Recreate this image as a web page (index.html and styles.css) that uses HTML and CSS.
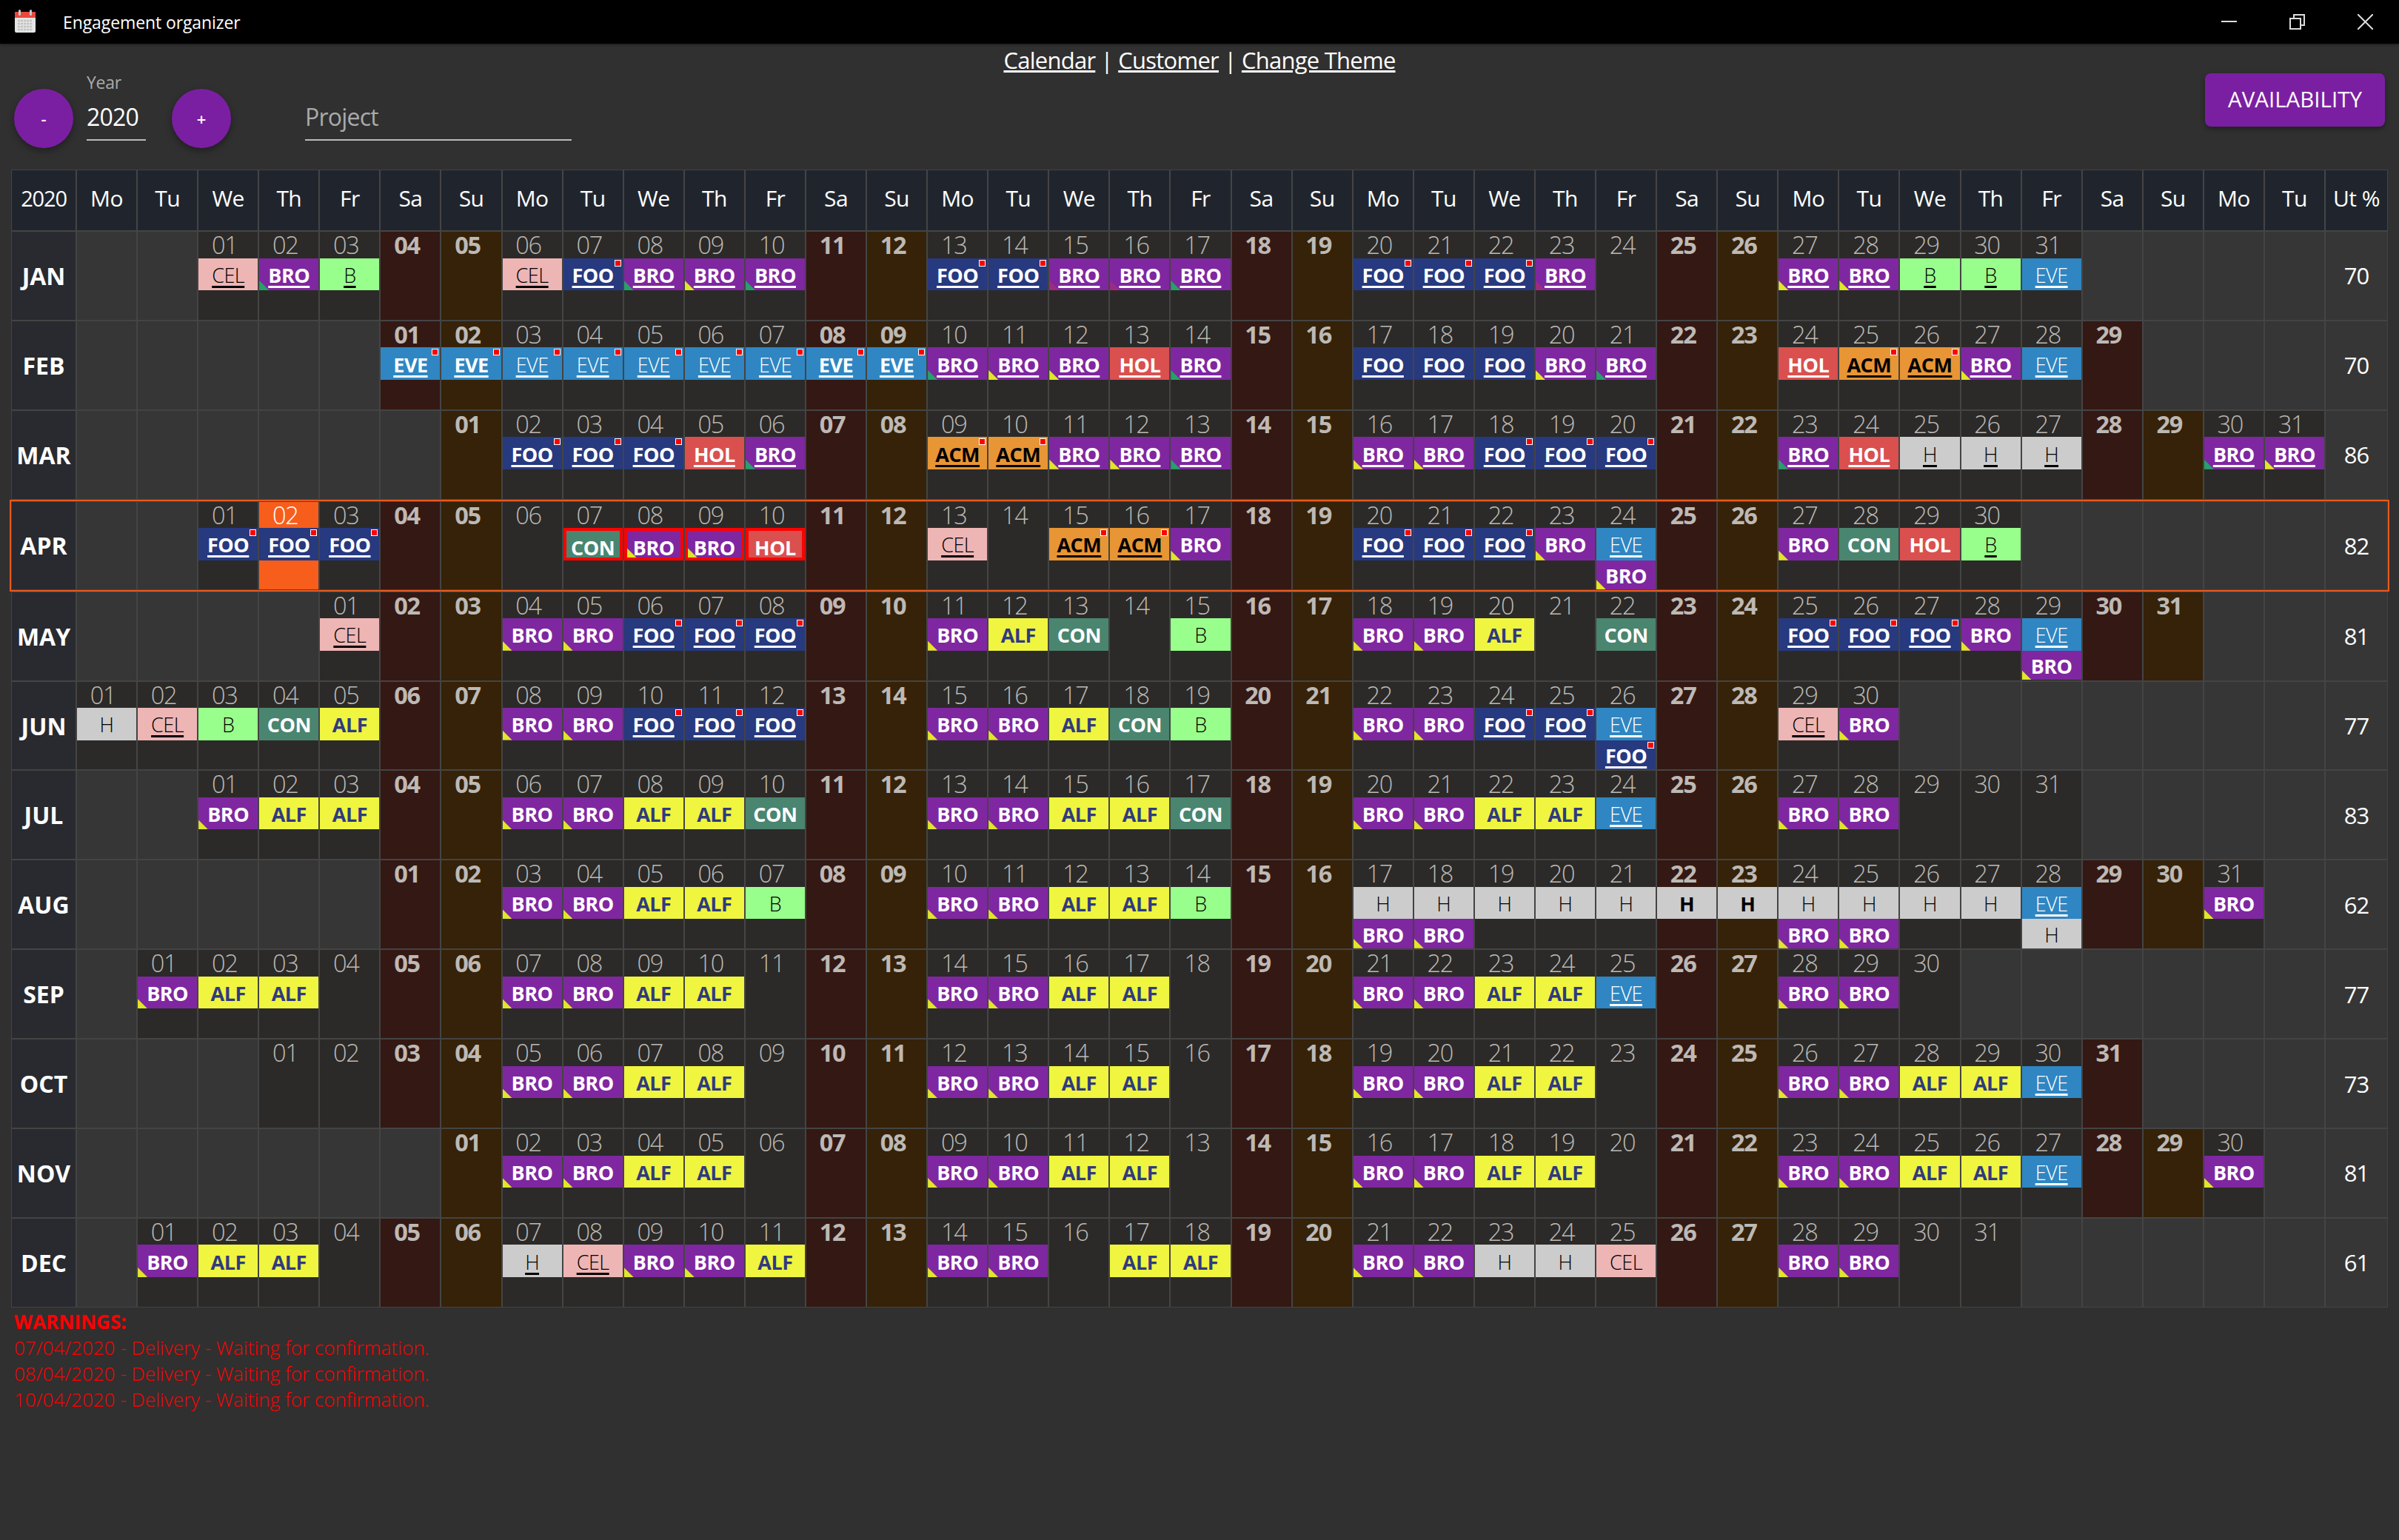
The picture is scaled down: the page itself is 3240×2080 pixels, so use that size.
FILE: index.html
```html
<!DOCTYPE html>
<html lang="en">
<head>
<meta charset="utf-8">
<title>Engagement organizer</title>
<link rel="stylesheet" href="styles.css">
</head>
<body>
<header class="titlebar">
<svg class="appicon" width="30" height="32" viewBox="0 0 30 32"><rect x="1" y="3" width="28" height="28" rx="2" fill="#e4e4e4"/><path d="M1 11V5a2 2 0 0 1 2-2h24a2 2 0 0 1 2 2v6z" fill="#e8483c"/><rect x="6" y="0" width="3" height="8" rx="1.5" fill="#c9c9c9"/><rect x="21" y="0" width="3" height="8" rx="1.5" fill="#c9c9c9"/><path d="M5 15h20M5 19h20M5 23h20M5 27h20" stroke="#c2c2c2" stroke-width="2.4" stroke-dasharray="3 1"/></svg>
<span class="apptitle">Engagement organizer</span>
<div class="winbtns">
<svg width="21" height="21" viewBox="0 0 21 21"><path d="M0 10h21" stroke="#ddd" stroke-width="2"/></svg>
<svg width="21" height="21" viewBox="0 0 21 21"><path d="M1 6h14v14H1zM6 6V1h14v14h-5" fill="none" stroke="#ddd" stroke-width="2"/></svg>
<svg width="21" height="21" viewBox="0 0 21 21"><path d="M0 0l21 21M21 0L0 21" stroke="#ddd" stroke-width="2"/></svg>
</div>
</header>
<section class="toolbar">
<div class="tools">
<button class="round">-</button>
<div class="field yearfield"><label class="fieldlabel">Year</label><div class="fieldvalue">2020</div></div>
<button class="round plus">+</button>
<div class="field projectfield"><div class="fieldvalue placeholder">Project</div></div>
</div>
<nav class="links"><a href="#">Calendar</a> | <a href="#">Customer</a> | <a href="#">Change Theme</a></nav>
<div class="actions"><button class="avail">AVAILABILITY</button></div>
</section>
<main class="cal">
<div class="row head"><div class="h yr">2020</div><div class="h">Mo</div><div class="h">Tu</div><div class="h">We</div><div class="h">Th</div><div class="h">Fr</div><div class="h">Sa</div><div class="h">Su</div><div class="h">Mo</div><div class="h">Tu</div><div class="h">We</div><div class="h">Th</div><div class="h">Fr</div><div class="h">Sa</div><div class="h">Su</div><div class="h">Mo</div><div class="h">Tu</div><div class="h">We</div><div class="h">Th</div><div class="h">Fr</div><div class="h">Sa</div><div class="h">Su</div><div class="h">Mo</div><div class="h">Tu</div><div class="h">We</div><div class="h">Th</div><div class="h">Fr</div><div class="h">Sa</div><div class="h">Su</div><div class="h">Mo</div><div class="h">Tu</div><div class="h">We</div><div class="h">Th</div><div class="h">Fr</div><div class="h">Sa</div><div class="h">Su</div><div class="h">Mo</div><div class="h">Tu</div><div class="h">Ut %</div></div>

<div class="row"><div class="m">JAN</div><div class="x"></div><div class="x"></div><div class="c"><p>01</p><span class="cel u">CEL</span></div><div class="c"><p>02</p><span class="bro u tg">BRO</span></div><div class="c"><p>03</p><span class="grn u">B</span></div><div class="c sa"><p>04</p></div><div class="c su"><p>05</p></div><div class="c"><p>06</p><span class="cel u">CEL</span></div><div class="c"><p>07</p><span class="foo u dot">FOO</span></div><div class="c"><p>08</p><span class="bro u tg">BRO</span></div><div class="c"><p>09</p><span class="bro u ty">BRO</span></div><div class="c"><p>10</p><span class="bro u tg">BRO</span></div><div class="c sa"><p>11</p></div><div class="c su"><p>12</p></div><div class="c"><p>13</p><span class="foo u dot">FOO</span></div><div class="c"><p>14</p><span class="foo u dot">FOO</span></div><div class="c"><p>15</p><span class="bro u tm">BRO</span></div><div class="c"><p>16</p><span class="bro u tm">BRO</span></div><div class="c"><p>17</p><span class="bro u tg">BRO</span></div><div class="c sa"><p>18</p></div><div class="c su"><p>19</p></div><div class="c"><p>20</p><span class="foo u dot">FOO</span></div><div class="c"><p>21</p><span class="foo u dot">FOO</span></div><div class="c"><p>22</p><span class="foo u dot">FOO</span></div><div class="c"><p>23</p><span class="bro u tm">BRO</span></div><div class="c"><p>24</p></div><div class="c sa"><p>25</p></div><div class="c su"><p>26</p></div><div class="c"><p>27</p><span class="bro u ty">BRO</span></div><div class="c"><p>28</p><span class="bro u ty">BRO</span></div><div class="c"><p>29</p><span class="grn u">B</span></div><div class="c"><p>30</p><span class="grn u">B</span></div><div class="c"><p>31</p><span class="eve u">EVE</span></div><div class="x"></div><div class="x"></div><div class="x"></div><div class="x"></div><div class="ut">70</div></div>

<div class="row"><div class="m">FEB</div><div class="x"></div><div class="x"></div><div class="x"></div><div class="x"></div><div class="x"></div><div class="c sa"><p>01</p><span class="eve u dot w">EVE</span></div><div class="c su"><p>02</p><span class="eve u dot w">EVE</span></div><div class="c"><p>03</p><span class="eve u dot">EVE</span></div><div class="c"><p>04</p><span class="eve u dot">EVE</span></div><div class="c"><p>05</p><span class="eve u dot">EVE</span></div><div class="c"><p>06</p><span class="eve u dot">EVE</span></div><div class="c"><p>07</p><span class="eve u dot">EVE</span></div><div class="c sa"><p>08</p><span class="eve u dot w">EVE</span></div><div class="c su"><p>09</p><span class="eve u dot w">EVE</span></div><div class="c"><p>10</p><span class="bro u tg">BRO</span></div><div class="c"><p>11</p><span class="bro u ty">BRO</span></div><div class="c"><p>12</p><span class="bro u ty">BRO</span></div><div class="c"><p>13</p><span class="hol u">HOL</span></div><div class="c"><p>14</p><span class="bro u tg">BRO</span></div><div class="c sa"><p>15</p></div><div class="c su"><p>16</p></div><div class="c"><p>17</p><span class="foo u">FOO</span></div><div class="c"><p>18</p><span class="foo u">FOO</span></div><div class="c"><p>19</p><span class="foo u">FOO</span></div><div class="c"><p>20</p><span class="bro u ty">BRO</span></div><div class="c"><p>21</p><span class="bro u tg">BRO</span></div><div class="c sa"><p>22</p></div><div class="c su"><p>23</p></div><div class="c"><p>24</p><span class="hol u">HOL</span></div><div class="c"><p>25</p><span class="acm u dot">ACM</span></div><div class="c"><p>26</p><span class="acm u dot">ACM</span></div><div class="c"><p>27</p><span class="bro u ty">BRO</span></div><div class="c"><p>28</p><span class="eve u">EVE</span></div><div class="c sa"><p>29</p></div><div class="x"></div><div class="x"></div><div class="x"></div><div class="ut">70</div></div>

<div class="row"><div class="m">MAR</div><div class="x"></div><div class="x"></div><div class="x"></div><div class="x"></div><div class="x"></div><div class="x"></div><div class="c su"><p>01</p></div><div class="c"><p>02</p><span class="foo u dot">FOO</span></div><div class="c"><p>03</p><span class="foo u dot">FOO</span></div><div class="c"><p>04</p><span class="foo u dot">FOO</span></div><div class="c"><p>05</p><span class="hol u">HOL</span></div><div class="c"><p>06</p><span class="bro u tg">BRO</span></div><div class="c sa"><p>07</p></div><div class="c su"><p>08</p></div><div class="c"><p>09</p><span class="acm u dot">ACM</span></div><div class="c"><p>10</p><span class="acm u dot">ACM</span></div><div class="c"><p>11</p><span class="bro u ty">BRO</span></div><div class="c"><p>12</p><span class="bro u ty">BRO</span></div><div class="c"><p>13</p><span class="bro u tg">BRO</span></div><div class="c sa"><p>14</p></div><div class="c su"><p>15</p></div><div class="c"><p>16</p><span class="bro u ty">BRO</span></div><div class="c"><p>17</p><span class="bro u ty">BRO</span></div><div class="c"><p>18</p><span class="foo u dot">FOO</span></div><div class="c"><p>19</p><span class="foo u dot">FOO</span></div><div class="c"><p>20</p><span class="foo u dot">FOO</span></div><div class="c sa"><p>21</p></div><div class="c su"><p>22</p></div><div class="c"><p>23</p><span class="bro u tg">BRO</span></div><div class="c"><p>24</p><span class="hol u">HOL</span></div><div class="c"><p>25</p><span class="hday u">H</span></div><div class="c"><p>26</p><span class="hday u">H</span></div><div class="c"><p>27</p><span class="hday u">H</span></div><div class="c sa"><p>28</p></div><div class="c su"><p>29</p></div><div class="c"><p>30</p><span class="bro u tg">BRO</span></div><div class="c"><p>31</p><span class="bro u ty">BRO</span></div><div class="ut">86</div></div>

<div class="row current"><div class="m">APR</div><div class="x"></div><div class="x"></div><div class="c"><p>01</p><span class="foo u dot">FOO</span></div><div class="c today"><p>02</p><span class="foo u dot">FOO</span></div><div class="c"><p>03</p><span class="foo u dot">FOO</span></div><div class="c sa"><p>04</p></div><div class="c su"><p>05</p></div><div class="c"><p>06</p></div><div class="c"><p>07</p><span class="con alert">CON</span></div><div class="c"><p>08</p><span class="bro ty alert">BRO</span></div><div class="c"><p>09</p><span class="bro ty alert">BRO</span></div><div class="c"><p>10</p><span class="hol alert">HOL</span></div><div class="c sa"><p>11</p></div><div class="c su"><p>12</p></div><div class="c"><p>13</p><span class="cel u">CEL</span></div><div class="c"><p>14</p></div><div class="c"><p>15</p><span class="acm u dot">ACM</span></div><div class="c"><p>16</p><span class="acm u dot">ACM</span></div><div class="c"><p>17</p><span class="bro ty">BRO</span></div><div class="c sa"><p>18</p></div><div class="c su"><p>19</p></div><div class="c"><p>20</p><span class="foo u dot">FOO</span></div><div class="c"><p>21</p><span class="foo u dot">FOO</span></div><div class="c"><p>22</p><span class="foo u dot">FOO</span></div><div class="c"><p>23</p><span class="bro ty">BRO</span></div><div class="c"><p>24</p><span class="eve u">EVE</span><span class="bro ty">BRO</span></div><div class="c sa"><p>25</p></div><div class="c su"><p>26</p></div><div class="c"><p>27</p><span class="bro ty">BRO</span></div><div class="c"><p>28</p><span class="con">CON</span></div><div class="c"><p>29</p><span class="hol">HOL</span></div><div class="c"><p>30</p><span class="grn u">B</span></div><div class="x"></div><div class="x"></div><div class="x"></div><div class="x"></div><div class="x"></div><div class="ut">82</div></div>

<div class="row"><div class="m">MAY</div><div class="x"></div><div class="x"></div><div class="x"></div><div class="x"></div><div class="c"><p>01</p><span class="cel u">CEL</span></div><div class="c sa"><p>02</p></div><div class="c su"><p>03</p></div><div class="c"><p>04</p><span class="bro ty">BRO</span></div><div class="c"><p>05</p><span class="bro ty">BRO</span></div><div class="c"><p>06</p><span class="foo u dot">FOO</span></div><div class="c"><p>07</p><span class="foo u dot">FOO</span></div><div class="c"><p>08</p><span class="foo u dot">FOO</span></div><div class="c sa"><p>09</p></div><div class="c su"><p>10</p></div><div class="c"><p>11</p><span class="bro ty">BRO</span></div><div class="c"><p>12</p><span class="alf">ALF</span></div><div class="c"><p>13</p><span class="con">CON</span></div><div class="c"><p>14</p></div><div class="c"><p>15</p><span class="grn">B</span></div><div class="c sa"><p>16</p></div><div class="c su"><p>17</p></div><div class="c"><p>18</p><span class="bro ty">BRO</span></div><div class="c"><p>19</p><span class="bro ty">BRO</span></div><div class="c"><p>20</p><span class="alf">ALF</span></div><div class="c"><p>21</p></div><div class="c"><p>22</p><span class="con">CON</span></div><div class="c sa"><p>23</p></div><div class="c su"><p>24</p></div><div class="c"><p>25</p><span class="foo u dot">FOO</span></div><div class="c"><p>26</p><span class="foo u dot">FOO</span></div><div class="c"><p>27</p><span class="foo u dot">FOO</span></div><div class="c"><p>28</p><span class="bro ty">BRO</span></div><div class="c"><p>29</p><span class="eve u">EVE</span><span class="bro ty">BRO</span></div><div class="c sa"><p>30</p></div><div class="c su"><p>31</p></div><div class="x"></div><div class="x"></div><div class="ut">81</div></div>

<div class="row"><div class="m">JUN</div><div class="c"><p>01</p><span class="hday">H</span></div><div class="c"><p>02</p><span class="cel u">CEL</span></div><div class="c"><p>03</p><span class="grn">B</span></div><div class="c"><p>04</p><span class="con">CON</span></div><div class="c"><p>05</p><span class="alf">ALF</span></div><div class="c sa"><p>06</p></div><div class="c su"><p>07</p></div><div class="c"><p>08</p><span class="bro ty">BRO</span></div><div class="c"><p>09</p><span class="bro ty">BRO</span></div><div class="c"><p>10</p><span class="foo u dot">FOO</span></div><div class="c"><p>11</p><span class="foo u dot">FOO</span></div><div class="c"><p>12</p><span class="foo u dot">FOO</span></div><div class="c sa"><p>13</p></div><div class="c su"><p>14</p></div><div class="c"><p>15</p><span class="bro ty">BRO</span></div><div class="c"><p>16</p><span class="bro ty">BRO</span></div><div class="c"><p>17</p><span class="alf">ALF</span></div><div class="c"><p>18</p><span class="con">CON</span></div><div class="c"><p>19</p><span class="grn">B</span></div><div class="c sa"><p>20</p></div><div class="c su"><p>21</p></div><div class="c"><p>22</p><span class="bro ty">BRO</span></div><div class="c"><p>23</p><span class="bro ty">BRO</span></div><div class="c"><p>24</p><span class="foo u dot">FOO</span></div><div class="c"><p>25</p><span class="foo u dot">FOO</span></div><div class="c"><p>26</p><span class="eve u">EVE</span><span class="foo u dot">FOO</span></div><div class="c sa"><p>27</p></div><div class="c su"><p>28</p></div><div class="c"><p>29</p><span class="cel u">CEL</span></div><div class="c"><p>30</p><span class="bro ty">BRO</span></div><div class="x"></div><div class="x"></div><div class="x"></div><div class="x"></div><div class="x"></div><div class="x"></div><div class="x"></div><div class="ut">77</div></div>

<div class="row"><div class="m">JUL</div><div class="x"></div><div class="x"></div><div class="c"><p>01</p><span class="bro ty">BRO</span></div><div class="c"><p>02</p><span class="alf">ALF</span></div><div class="c"><p>03</p><span class="alf">ALF</span></div><div class="c sa"><p>04</p></div><div class="c su"><p>05</p></div><div class="c"><p>06</p><span class="bro ty">BRO</span></div><div class="c"><p>07</p><span class="bro ty">BRO</span></div><div class="c"><p>08</p><span class="alf">ALF</span></div><div class="c"><p>09</p><span class="alf">ALF</span></div><div class="c"><p>10</p><span class="con">CON</span></div><div class="c sa"><p>11</p></div><div class="c su"><p>12</p></div><div class="c"><p>13</p><span class="bro ty">BRO</span></div><div class="c"><p>14</p><span class="bro ty">BRO</span></div><div class="c"><p>15</p><span class="alf">ALF</span></div><div class="c"><p>16</p><span class="alf">ALF</span></div><div class="c"><p>17</p><span class="con">CON</span></div><div class="c sa"><p>18</p></div><div class="c su"><p>19</p></div><div class="c"><p>20</p><span class="bro ty">BRO</span></div><div class="c"><p>21</p><span class="bro ty">BRO</span></div><div class="c"><p>22</p><span class="alf">ALF</span></div><div class="c"><p>23</p><span class="alf">ALF</span></div><div class="c"><p>24</p><span class="eve u">EVE</span></div><div class="c sa"><p>25</p></div><div class="c su"><p>26</p></div><div class="c"><p>27</p><span class="bro ty">BRO</span></div><div class="c"><p>28</p><span class="bro ty">BRO</span></div><div class="c"><p>29</p></div><div class="c"><p>30</p></div><div class="c"><p>31</p></div><div class="x"></div><div class="x"></div><div class="x"></div><div class="x"></div><div class="ut">83</div></div>

<div class="row"><div class="m">AUG</div><div class="x"></div><div class="x"></div><div class="x"></div><div class="x"></div><div class="x"></div><div class="c sa"><p>01</p></div><div class="c su"><p>02</p></div><div class="c"><p>03</p><span class="bro ty">BRO</span></div><div class="c"><p>04</p><span class="bro ty">BRO</span></div><div class="c"><p>05</p><span class="alf">ALF</span></div><div class="c"><p>06</p><span class="alf">ALF</span></div><div class="c"><p>07</p><span class="grn">B</span></div><div class="c sa"><p>08</p></div><div class="c su"><p>09</p></div><div class="c"><p>10</p><span class="bro ty">BRO</span></div><div class="c"><p>11</p><span class="bro ty">BRO</span></div><div class="c"><p>12</p><span class="alf">ALF</span></div><div class="c"><p>13</p><span class="alf">ALF</span></div><div class="c"><p>14</p><span class="grn">B</span></div><div class="c sa"><p>15</p></div><div class="c su"><p>16</p></div><div class="c"><p>17</p><span class="hday">H</span><span class="bro ty">BRO</span></div><div class="c"><p>18</p><span class="hday">H</span><span class="bro ty">BRO</span></div><div class="c"><p>19</p><span class="hday">H</span></div><div class="c"><p>20</p><span class="hday">H</span></div><div class="c"><p>21</p><span class="hday">H</span></div><div class="c sa"><p>22</p><span class="hday w">H</span></div><div class="c su"><p>23</p><span class="hday w">H</span></div><div class="c"><p>24</p><span class="hday">H</span><span class="bro ty">BRO</span></div><div class="c"><p>25</p><span class="hday">H</span><span class="bro ty">BRO</span></div><div class="c"><p>26</p><span class="hday">H</span></div><div class="c"><p>27</p><span class="hday">H</span></div><div class="c"><p>28</p><span class="eve u">EVE</span><span class="hday">H</span></div><div class="c sa"><p>29</p></div><div class="c su"><p>30</p></div><div class="c"><p>31</p><span class="bro ty">BRO</span></div><div class="x"></div><div class="ut">62</div></div>

<div class="row"><div class="m">SEP</div><div class="x"></div><div class="c"><p>01</p><span class="bro ty">BRO</span></div><div class="c"><p>02</p><span class="alf">ALF</span></div><div class="c"><p>03</p><span class="alf">ALF</span></div><div class="c"><p>04</p></div><div class="c sa"><p>05</p></div><div class="c su"><p>06</p></div><div class="c"><p>07</p><span class="bro ty">BRO</span></div><div class="c"><p>08</p><span class="bro ty">BRO</span></div><div class="c"><p>09</p><span class="alf">ALF</span></div><div class="c"><p>10</p><span class="alf">ALF</span></div><div class="c"><p>11</p></div><div class="c sa"><p>12</p></div><div class="c su"><p>13</p></div><div class="c"><p>14</p><span class="bro ty">BRO</span></div><div class="c"><p>15</p><span class="bro ty">BRO</span></div><div class="c"><p>16</p><span class="alf">ALF</span></div><div class="c"><p>17</p><span class="alf">ALF</span></div><div class="c"><p>18</p></div><div class="c sa"><p>19</p></div><div class="c su"><p>20</p></div><div class="c"><p>21</p><span class="bro ty">BRO</span></div><div class="c"><p>22</p><span class="bro ty">BRO</span></div><div class="c"><p>23</p><span class="alf">ALF</span></div><div class="c"><p>24</p><span class="alf">ALF</span></div><div class="c"><p>25</p><span class="eve u">EVE</span></div><div class="c sa"><p>26</p></div><div class="c su"><p>27</p></div><div class="c"><p>28</p><span class="bro ty">BRO</span></div><div class="c"><p>29</p><span class="bro ty">BRO</span></div><div class="c"><p>30</p></div><div class="x"></div><div class="x"></div><div class="x"></div><div class="x"></div><div class="x"></div><div class="x"></div><div class="ut">77</div></div>

<div class="row"><div class="m">OCT</div><div class="x"></div><div class="x"></div><div class="x"></div><div class="c"><p>01</p></div><div class="c"><p>02</p></div><div class="c sa"><p>03</p></div><div class="c su"><p>04</p></div><div class="c"><p>05</p><span class="bro ty">BRO</span></div><div class="c"><p>06</p><span class="bro ty">BRO</span></div><div class="c"><p>07</p><span class="alf">ALF</span></div><div class="c"><p>08</p><span class="alf">ALF</span></div><div class="c"><p>09</p></div><div class="c sa"><p>10</p></div><div class="c su"><p>11</p></div><div class="c"><p>12</p><span class="bro ty">BRO</span></div><div class="c"><p>13</p><span class="bro ty">BRO</span></div><div class="c"><p>14</p><span class="alf">ALF</span></div><div class="c"><p>15</p><span class="alf">ALF</span></div><div class="c"><p>16</p></div><div class="c sa"><p>17</p></div><div class="c su"><p>18</p></div><div class="c"><p>19</p><span class="bro ty">BRO</span></div><div class="c"><p>20</p><span class="bro ty">BRO</span></div><div class="c"><p>21</p><span class="alf">ALF</span></div><div class="c"><p>22</p><span class="alf">ALF</span></div><div class="c"><p>23</p></div><div class="c sa"><p>24</p></div><div class="c su"><p>25</p></div><div class="c"><p>26</p><span class="bro ty">BRO</span></div><div class="c"><p>27</p><span class="bro ty">BRO</span></div><div class="c"><p>28</p><span class="alf">ALF</span></div><div class="c"><p>29</p><span class="alf">ALF</span></div><div class="c"><p>30</p><span class="eve u">EVE</span></div><div class="c sa"><p>31</p></div><div class="x"></div><div class="x"></div><div class="x"></div><div class="ut">73</div></div>

<div class="row"><div class="m">NOV</div><div class="x"></div><div class="x"></div><div class="x"></div><div class="x"></div><div class="x"></div><div class="x"></div><div class="c su"><p>01</p></div><div class="c"><p>02</p><span class="bro ty">BRO</span></div><div class="c"><p>03</p><span class="bro ty">BRO</span></div><div class="c"><p>04</p><span class="alf">ALF</span></div><div class="c"><p>05</p><span class="alf">ALF</span></div><div class="c"><p>06</p></div><div class="c sa"><p>07</p></div><div class="c su"><p>08</p></div><div class="c"><p>09</p><span class="bro ty">BRO</span></div><div class="c"><p>10</p><span class="bro ty">BRO</span></div><div class="c"><p>11</p><span class="alf">ALF</span></div><div class="c"><p>12</p><span class="alf">ALF</span></div><div class="c"><p>13</p></div><div class="c sa"><p>14</p></div><div class="c su"><p>15</p></div><div class="c"><p>16</p><span class="bro ty">BRO</span></div><div class="c"><p>17</p><span class="bro ty">BRO</span></div><div class="c"><p>18</p><span class="alf">ALF</span></div><div class="c"><p>19</p><span class="alf">ALF</span></div><div class="c"><p>20</p></div><div class="c sa"><p>21</p></div><div class="c su"><p>22</p></div><div class="c"><p>23</p><span class="bro ty">BRO</span></div><div class="c"><p>24</p><span class="bro ty">BRO</span></div><div class="c"><p>25</p><span class="alf">ALF</span></div><div class="c"><p>26</p><span class="alf">ALF</span></div><div class="c"><p>27</p><span class="eve u">EVE</span></div><div class="c sa"><p>28</p></div><div class="c su"><p>29</p></div><div class="c"><p>30</p><span class="bro ty">BRO</span></div><div class="x"></div><div class="ut">81</div></div>

<div class="row"><div class="m">DEC</div><div class="x"></div><div class="c"><p>01</p><span class="bro ty">BRO</span></div><div class="c"><p>02</p><span class="alf">ALF</span></div><div class="c"><p>03</p><span class="alf">ALF</span></div><div class="c"><p>04</p></div><div class="c sa"><p>05</p></div><div class="c su"><p>06</p></div><div class="c"><p>07</p><span class="hday u">H</span></div><div class="c"><p>08</p><span class="cel u">CEL</span></div><div class="c"><p>09</p><span class="bro ty">BRO</span></div><div class="c"><p>10</p><span class="bro ty">BRO</span></div><div class="c"><p>11</p><span class="alf">ALF</span></div><div class="c sa"><p>12</p></div><div class="c su"><p>13</p></div><div class="c"><p>14</p><span class="bro ty">BRO</span></div><div class="c"><p>15</p><span class="bro ty">BRO</span></div><div class="c"><p>16</p></div><div class="c"><p>17</p><span class="alf">ALF</span></div><div class="c"><p>18</p><span class="alf">ALF</span></div><div class="c sa"><p>19</p></div><div class="c su"><p>20</p></div><div class="c"><p>21</p><span class="bro ty">BRO</span></div><div class="c"><p>22</p><span class="bro ty">BRO</span></div><div class="c"><p>23</p><span class="hday">H</span></div><div class="c"><p>24</p><span class="hday">H</span></div><div class="c"><p>25</p><span class="cel">CEL</span></div><div class="c sa"><p>26</p></div><div class="c su"><p>27</p></div><div class="c"><p>28</p><span class="bro ty">BRO</span></div><div class="c"><p>29</p><span class="bro ty">BRO</span></div><div class="c"><p>30</p></div><div class="c"><p>31</p></div><div class="x"></div><div class="x"></div><div class="x"></div><div class="x"></div><div class="x"></div><div class="ut">61</div></div>
</main>
<section class="warnings">
<div class="warnhead">WARNINGS:</div>
<div>07/04/2020 - Delivery - Waiting for confirmation.</div>
<div>08/04/2020 - Delivery - Waiting for confirmation.</div>
<div>10/04/2020 - Delivery - Waiting for confirmation.</div>
</section>
</body>
</html>
```
FILE: styles.css
```css
* { box-sizing: border-box; }
html, body { margin: 0; padding: 0; }
body {
  width: 3240px;
  height: 2080px;
  overflow: hidden;
  background: #303030;
  color: #fff;
  font-family: "Open Sans", "Noto Sans", sans-serif;
}

.titlebar {
  height: 59px;
  background: #000;
  display: flex;
  align-items: center;
  padding: 0 35px 0 19px;
  box-shadow: 0 1px 3px rgba(0, 0, 0, .5);
}
.appicon { margin-right: 36px; margin-top: -1px; }
.apptitle { font-size: 23px; letter-spacing: -.1px; flex: 1; }
.winbtns { display: flex; gap: 71px; }

.toolbar {
  height: 170px;
  display: grid;
  grid-template-columns: 1fr auto 1fr;
  align-items: start;
}
.tools { display: flex; padding: 39px 0 0 19px; }
.round {
  width: 80px;
  height: 80px;
  margin-top: 22px;
  border: 0;
  border-radius: 50%;
  background: #7b1fa2;
  color: #fff;
  font: 600 22px "Open Sans", sans-serif;
  box-shadow: 0 4px 10px rgba(0, 0, 0, .35);
}
.plus { margin-left: 35px; }
.yearfield { width: 80px; margin-left: 18px; }
.projectfield { width: 360px; margin-left: 100px; padding-top: 36px; }
.fieldlabel { display: block; height: 26px; line-height: 26px; font-size: 23px; color: #aaa; letter-spacing: -.3px; margin-bottom: 10px; }
.fieldvalue {
  height: 56px;
  line-height: 48px;
  font-size: 32px;
  letter-spacing: -.8px;
  border-bottom: 2px solid #bbb;
}
.placeholder { color: #aaa; }
.links { line-height: 44px; font-size: 31px; letter-spacing: -.75px; color: #fff; }
.links a { color: #fff; }
.actions { display: flex; justify-content: flex-end; padding: 40px 19px 0 0; }
.avail {
  width: 243px;
  height: 72px;
  padding: 0 0 3px;
  border: 0;
  border-radius: 8px;
  background: #7b1fa2;
  color: #fff;
  font: 400 29.5px "Open Sans", sans-serif;
  box-shadow: 0 3px 6px rgba(0, 0, 0, .35);
}

.cal {
  margin: 0 15px;
  background: #444;
  border: 1px solid #444;
  display: flex;
  flex-direction: column;
  gap: 2px;
}
.row {
  display: grid;
  grid-template-columns: 86px repeat(37, minmax(0, 1fr)) 83px;
  column-gap: 2px;
  height: 118.9px;
}
.row.head { height: 81px; }
.row.current {
  height: 118px;
  margin: 2px 0;
  outline: 2px solid #e8591d;
  outline-offset: 1px;
}
.h {
  background: #20252d;
  display: flex;
  align-items: center;
  justify-content: center;
  font-size: 30px;
  letter-spacing: -.6px;
  padding-bottom: 7px;
}
.yr { font-size: 29px; letter-spacing: -1.2px; }
.m {
  background: #282a2f;
  display: flex;
  align-items: center;
  justify-content: center;
  font-size: 32px;
  font-weight: 700;
}
.ut {
  background: #363636;
  display: flex;
  align-items: center;
  justify-content: center;
  font-size: 31px;
  letter-spacing: -1px;
}
.x { background: #363636; }
.c { background: #2b2a28; }
.sa { background: #341813; }
.su { background: #352208; }
.today { background: #f75e1c; }

.c p {
  margin: 0;
  height: 35.5px;
  line-height: 35.5px;
  padding-right: 10px;
  text-align: center;
  font-size: 32.5px;
  font-weight: 300;
  letter-spacing: -1.3px;
  color: #bdb9b5;
}
.sa p, .su p { font-weight: 700; }
.today p { color: #fff; }

.c span {
  position: relative;
  display: flex;
  align-items: center;
  justify-content: center;
  height: 43.5px;
  padding-top: 2px;
  font-size: 27px;
  line-height: 1;
  font-weight: 700;
  letter-spacing: -.5px;
  text-decoration-thickness: 2.5px;
  text-underline-offset: 4px;
}
.c span + span { height: 39.5px; }
.u { text-decoration: underline; }

.bro { background: #7f27a0; color: #fff; }
.foo { background: #27397f; color: #fff; }
.alf { background: #f0f53f; color: #2f3a80; }
.con { background: #4a8570; color: #fff; }
.hol { background: #d9504f; color: #fff; }
.acm { background: #e89535; color: #000; }
.c .eve { background: #2f86c2; color: #fff; font-weight: 300; }
.c .cel { background: #eeb5b5; color: #000; font-weight: 300; }
.c .grn { background: #99ff8c; color: #000; font-weight: 300; }
.c .hday { background: #ccc; color: #000; font-weight: 300; }
.c .w { font-weight: 700; }

.c .alert { border: 4px solid #f00; padding-top: 8px; height: 44px; }

.ty::before, .tg::before, .tm::before {
  content: "";
  position: absolute;
  left: 0;
  bottom: 0;
  width: 13px;
  height: 13px;
  clip-path: polygon(0 0, 100% 100%, 0 100%);
}
.ty::before { background: #e0e628; }
.tg::before { background: #27a06a; }
.tm::before { background: #9c2c80; }

.dot::after {
  content: "";
  position: absolute;
  top: 2px;
  right: 2px;
  width: 7px;
  height: 7px;
  background: #f00;
  border: 1px solid #fff;
}

.warnings {
  margin: 2px 0 0 19px;
  color: #f00;
  font-size: 26px;
  font-weight: 300;
  line-height: 35px;
}
.warnhead { font-weight: 700; }
```
